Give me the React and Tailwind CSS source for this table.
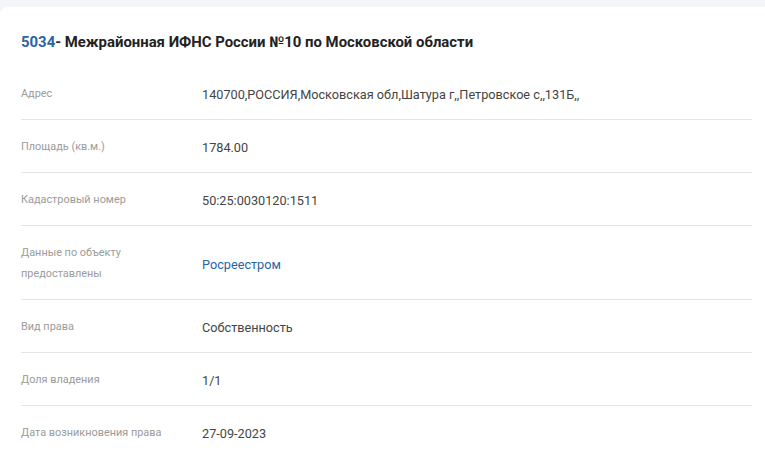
import React from "react";

const rows = [
  { label: "Адрес", value: "140700,РОССИЯ,Московская обл,Шатура г,,Петровское с,,131Б,," },
  { label: "Площадь (кв.м.)", value: "1784.00" },
  { label: "Кадастровый номер", value: "50:25:0030120:1511" },
  { label: ["Данные по объекту", "предоставлены"], value: "Росреестром", link: true },
  { label: "Вид права", value: "Собственность" },
  { label: "Доля владения", value: "1/1" },
  { label: "Дата возникновения права", value: "27-09-2023", last: true },
];

export default function App() {
  return (
    <div className="w-[765px] h-[457px] overflow-hidden bg-[#f3f6f9] pt-[7px] font-['Roboto',sans-serif]">
      <div className="bg-white rounded-tl-[8px] h-full pl-[21px] pr-[13px] pt-[24px]">
        <h2 className="text-[14.9px] leading-[22px] font-bold text-[#222] mb-[14px]">
          <span className="text-[#2a63a6]">5034</span>- Межрайонная ИФНС России №10 по Московской области
        </h2>
        {rows.map((r, i) => (
          <div
            key={i}
            className={`flex items-center pt-[17px] pb-[14px] ${r.last ? "" : "border-b border-[#e4e4e4]"}`}
          >
            <div className="w-[181px] shrink-0 text-[10.9px] leading-[21px] text-[#9b9b9b] -translate-y-[1px]">
              {Array.isArray(r.label) ? r.label.map((l, j) => <div key={j}>{l}</div>) : r.label}
            </div>
            <div className={`text-[12.7px] leading-[21px] ${r.link ? "text-[#2a63a6]" : "text-[#444]"}`}>
              {r.value}
            </div>
          </div>
        ))}
      </div>
    </div>
  );
}
